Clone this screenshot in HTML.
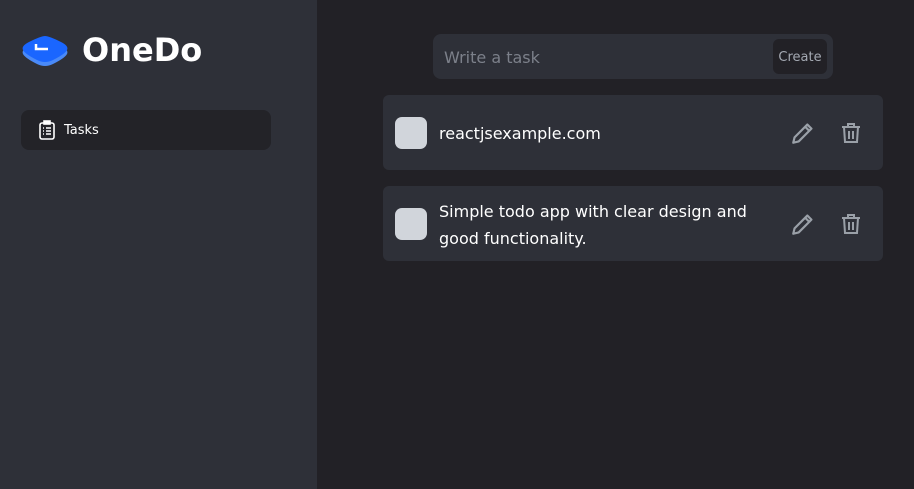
<!DOCTYPE html>
<html><head><style>
*{margin:0;padding:0;box-sizing:border-box}
body{width:914px;height:489px;background:#222126;font-family:"DejaVu Sans","Liberation Sans",sans-serif;overflow:hidden;position:relative;color:#fff}
.side{position:absolute;left:0;top:0;width:317px;height:489px;background:#2e3038}
.logo{position:absolute;left:21px;top:34px}
.brand{position:absolute;left:82px;top:31px;font-size:32px;font-weight:bold;color:#fff}
.nav{position:absolute;left:21px;top:110px;width:250px;height:40px;background:#232328;border-radius:8px}
.nav span{position:absolute;left:43px;top:13px;font-size:13px}
.input{position:absolute;left:433px;top:34px;width:400px;height:45px;background:#2e3038;border-radius:8px}
.input .ph{position:absolute;left:11px;top:14px;font-size:16px;color:#7c808a}
.btn{position:absolute;left:773px;top:39px;width:54px;height:35px;background:#222126;border-radius:6px;color:#a4a9b2;font-size:13px;text-align:center;line-height:37px}
.card{position:absolute;left:383px;width:500px;background:#2e3038;border-radius:6px}
.cb{position:absolute;left:12px;width:32px;height:32px;background:#d1d5db;border-radius:7px}
.txt{position:absolute;left:56px;font-size:16px;line-height:27px;color:#fff}
.ic{position:absolute}
</style></head><body>
<div class="side">
<svg class="logo" width="48" height="34" viewBox="0 0 48 34"><path d="M24 6 Q28 6 40 12 Q48 16 46 20 Q44 24 32 30 Q24 34 16 30 Q4 24 2 20 Q0 16 8 12 Q20 6 24 6Z" fill="#4a8af8"/><path d="M24 2 Q28 2 40 8 Q48 12 46 16 Q44 20 32 26 Q24 30 16 26 Q4 20 2 16 Q0 12 8 8 Q20 2 24 2Z" fill="#1a66ff"/><path d="M15 10 v5 h12" stroke="#fff" stroke-width="2.5" fill="none"/></svg>
<div class="brand">OneDo</div>
<div class="nav">
<svg style="position:absolute;left:18px;top:10px" width="16" height="20" viewBox="0 0 16 20" fill="none" stroke="#fff" stroke-width="1.6"><rect x="1" y="3" width="14" height="16" rx="2"/><rect x="5" y="1" width="6" height="3" fill="#fff"/><path d="M4 8h1M7 8h5M4 11h1M7 11h5M4 14h1M7 14h5"/></svg>
<span>Tasks</span></div>
</div>
<div class="input"><span class="ph">Write a task</span></div>
<div class="btn">Create</div>

<div class="card" style="top:95px;height:75px">
<div class="cb" style="top:22px"></div>
<div class="txt" style="top:25px">reactjsexample.com</div>
<svg class="ic" style="left:407px;top:25px" width="26" height="26" viewBox="0 0 24 24" fill="none" stroke="#9aa0a8" stroke-width="2" stroke-linejoin="round"><path d="M3 21l1.2-5L16 4.2l3.8 3.8L8 19.8z M14 6.2l3.8 3.8"/></svg>
<svg class="ic" style="left:456px;top:26px" width="24" height="24" viewBox="0 0 24 24" fill="none" stroke="#9aa0a8" stroke-width="2"><path d="M3 6h18M9 6V3h6v3M5 6l1 15h12l1-15M10 10v8M14 10v8"/></svg>
</div>
<div class="card" style="top:186px;height:75px">
<div class="cb" style="top:22px"></div>
<div class="txt" style="top:12px">Simple todo app with clear design and<br>good functionality.</div>
<svg class="ic" style="left:407px;top:25px" width="26" height="26" viewBox="0 0 24 24" fill="none" stroke="#9aa0a8" stroke-width="2" stroke-linejoin="round"><path d="M3 21l1.2-5L16 4.2l3.8 3.8L8 19.8z M14 6.2l3.8 3.8"/></svg>
<svg class="ic" style="left:456px;top:26px" width="24" height="24" viewBox="0 0 24 24" fill="none" stroke="#9aa0a8" stroke-width="2"><path d="M3 6h18M9 6V3h6v3M5 6l1 15h12l1-15M10 10v8M14 10v8"/></svg>
</div>
</body></html>
